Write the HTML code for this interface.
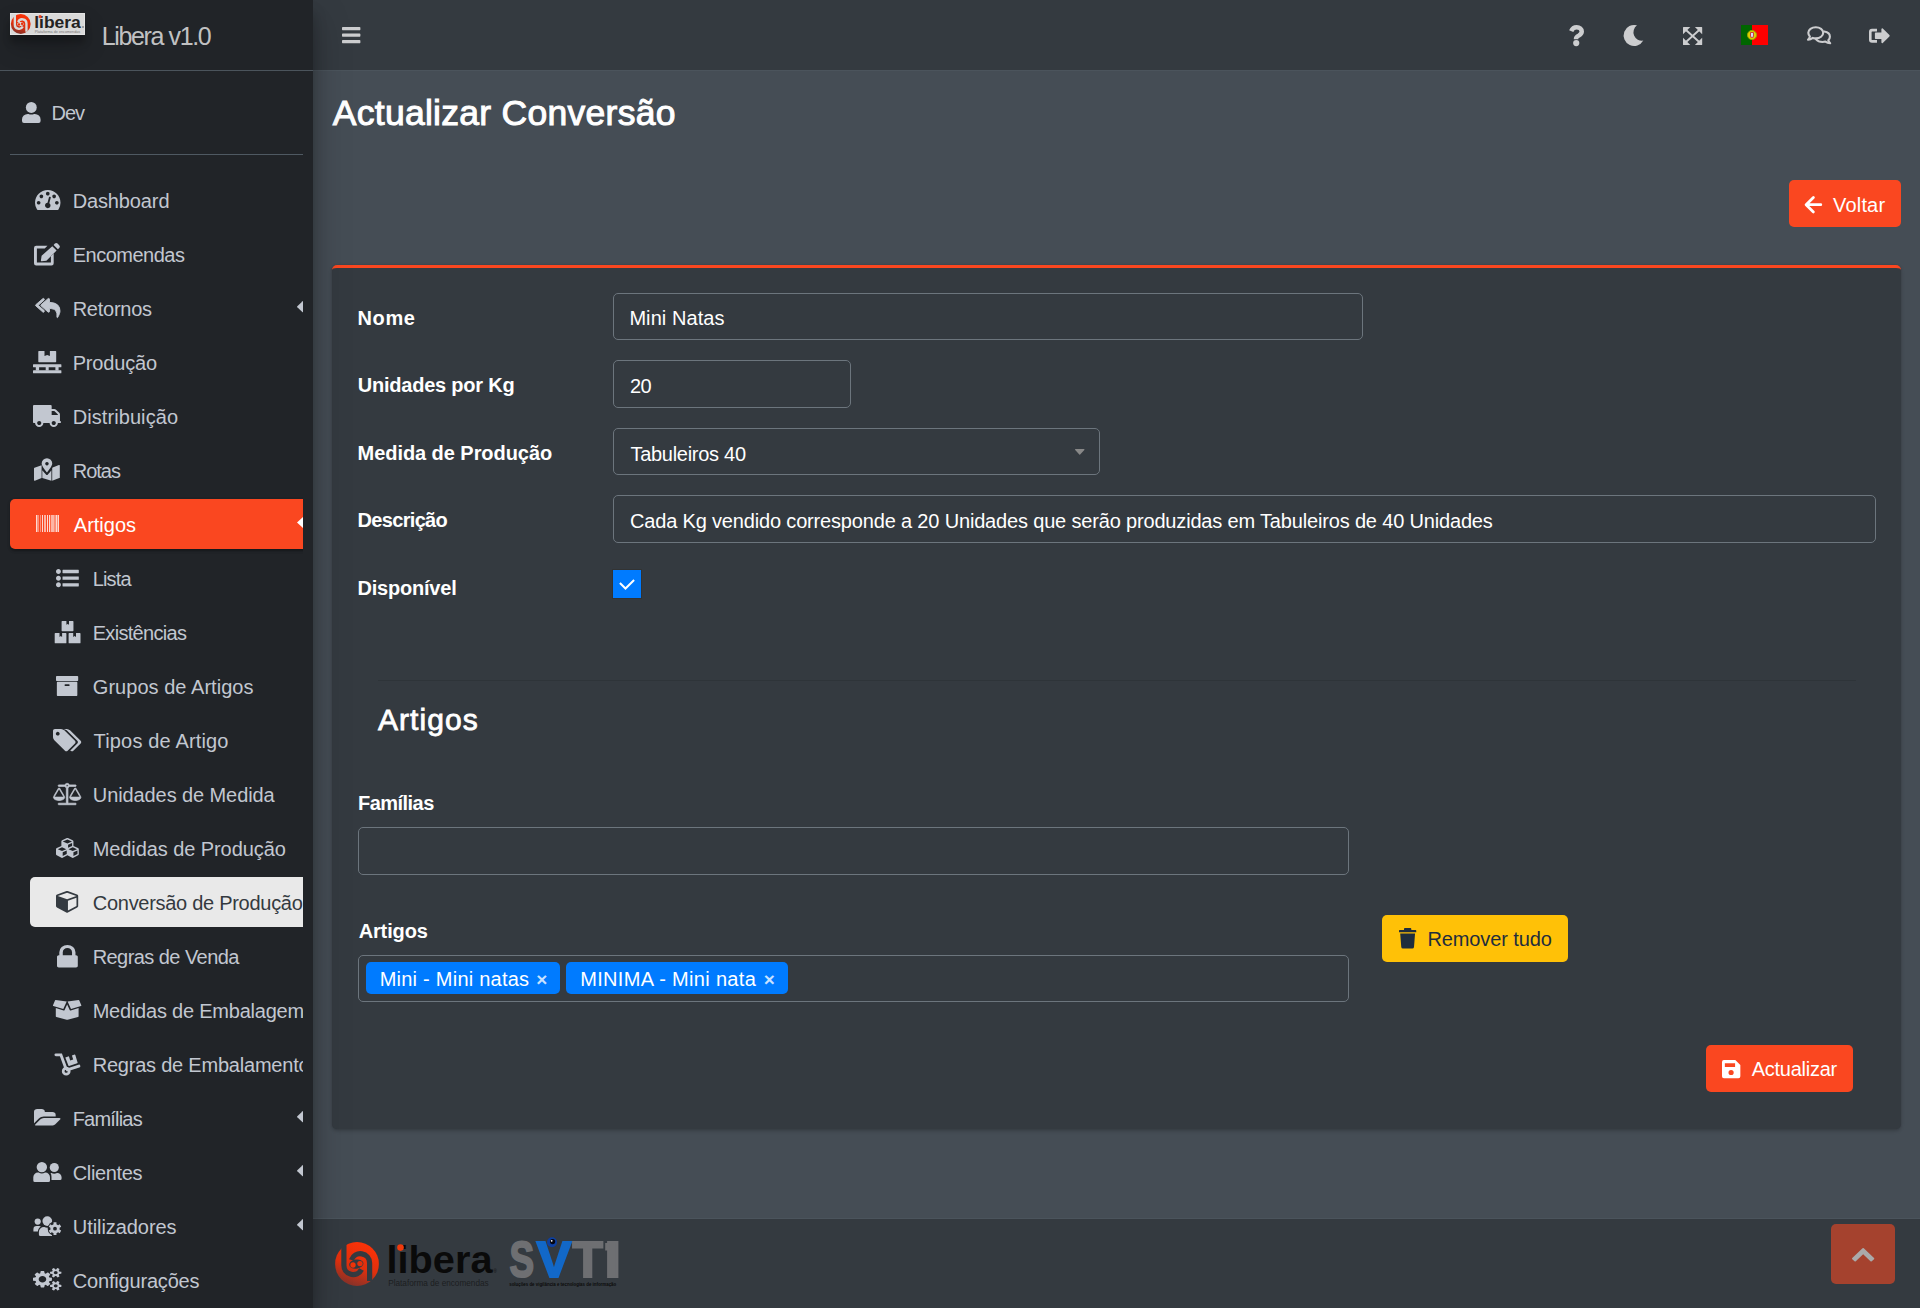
<!DOCTYPE html>
<html lang="pt"><head><meta charset="utf-8"><title>Libera v1.0 - Actualizar Conversão</title>
<style>
*{box-sizing:border-box}
html,body{margin:0;padding:0}
body{width:1920px;height:1308px;overflow:hidden;position:relative;background:#454d55;color:#fff;
font-family:"Liberation Sans",Arial,Helvetica,sans-serif;font-size:20px;line-height:1}
.t{position:absolute;white-space:nowrap;line-height:1;display:block;margin:0;padding:0;font-weight:400;text-decoration:none}
header,main,footer,aside,nav,form,ul,li,section{display:contents}
.i{position:absolute;display:block;overflow:visible}
.abs{position:absolute}
#nav{position:absolute;left:312.5px;top:0;width:1607.5px;height:71px;background:#343a40;border-bottom:1px solid #4b545c}
#footer{position:absolute;left:312.5px;top:1217.5px;width:1607.5px;height:91px;background:#343a40;border-top:1px solid #4b545c}
#sb{position:absolute;left:0;top:0;width:312.5px;height:1308px;background:#212428;
box-shadow:0 17.5px 35px rgba(0,0,0,.25),0 12.5px 12.5px rgba(0,0,0,.22)}
#sbin{position:absolute;left:0;top:71px;width:303px;height:1237px;overflow:hidden}
#sbin > div{position:absolute;left:0;top:-71px;width:400px;height:1308px}
.card{position:absolute;left:332px;top:265px;width:1568.6px;height:864px;background:#343a40;border-top:3.75px solid #fa4720;border-radius:5px;
box-shadow:0 0 1.25px rgba(0,0,0,.125),0 1.25px 3.75px rgba(0,0,0,.2)}
.inp{position:absolute;border:1px solid #6c757d;border-radius:5px;background:#343a40}
.btn{position:absolute;border-radius:5px}
.tag{position:absolute;background:#007bff;border-radius:5px}
</style></head><body>

<header>
<div id="nav"></div>
<svg class="i" style="left:342.00px;top:27.30px;" width="18.40" height="16.30" viewBox="0 0 1536 1280" preserveAspectRatio="none"><path fill="#cccdcf" d="M1536 1088V1216Q1536 1242 1517 1261Q1498 1280 1472 1280H64Q38 1280 19 1261Q0 1242 0 1216V1088Q0 1062 19 1043Q38 1024 64 1024H1472Q1498 1024 1517 1043Q1536 1062 1536 1088ZM1536 576V704Q1536 730 1517 749Q1498 768 1472 768H64Q38 768 19 749Q0 730 0 704V576Q0 550 19 531Q38 512 64 512H1472Q1498 512 1517 531Q1536 550 1536 576ZM1536 64V192Q1536 218 1517 237Q1498 256 1472 256H64Q38 256 19 237Q0 218 0 192V64Q0 38 19 19Q38 0 64 0H1472Q1498 0 1517 19Q1536 38 1536 64Z"/></svg>
<svg class="i" style="left:1568.80px;top:24.90px;color:#cccdcf;" width="15.05" height="21.20" viewBox="0 0 15 21.2" preserveAspectRatio="none"><g fill="#cccdcf"><path d="M2.2,6.1 C3.3,3.5 5.2,2.3 7.7,2.3 C10.6,2.3 12.7,4 12.7,6.5 C12.7,8.6 11.4,9.6 9.7,10.6 C7.9,11.6 7.05,12.3 7.05,13.4 V14.2" fill="none" stroke="currentColor" stroke-width="4.5" stroke-linejoin="round"/><circle cx="7.2" cy="18.1" r="3.1"/></g></svg>
<svg class="i" style="left:1623.80px;top:25.00px;color:#cccdcf;" width="19.60" height="21.00" viewBox="0 0 19.6 21" preserveAspectRatio="none"><g fill="#cccdcf"><path d="M13.0,0.35 A10.5,10.5 0 1 0 19.3,15.6 A8.47,8.47 0 0 1 13.0,0.35Z"/></g></svg>
<svg class="i" style="left:1682.80px;top:26.70px;color:#cccdcf;" width="19.20" height="18.00" viewBox="0 0 19.4 18.1" preserveAspectRatio="none"><g fill="#cccdcf"><path d="M3,3 L16.4,15.1 M16.4,3 L3,15.1" fill="none" stroke="currentColor" stroke-width="1.9"/><path d="M0.6,0 H7.4 L0,7.4 V0.6 A0.6,0.6 0 0 1 0.6,0Z M18.8,0 H12 L19.4,7.4 V0.6 A0.6,0.6 0 0 0 18.8,0Z M0.6,18.1 H7.4 L0,10.7 V17.5 A0.6,0.6 0 0 0 0.6,18.1Z M18.8,18.1 H12 L19.4,10.7 V17.5 A0.6,0.6 0 0 1 18.8,18.1Z"/></g></svg>
<div class="abs" style="left:1741.2px;top:25px;width:27px;height:20px;background:#ff0000"></div>
<div class="abs" style="left:1741.2px;top:25px;width:10.8px;height:20px;background:#006600"></div>
<div class="abs" style="left:1746.9px;top:30px;width:9.8px;height:9.8px;border-radius:50%;background:#e0d000;border:1px solid #9aa800"></div>
<div class="abs" style="left:1749.5px;top:32px;width:4.6px;height:5.8px;border-radius:1px 1px 2.3px 2.3px;background:#d8dcf4;border:0.8px solid #d04040"></div>
<svg class="i" style="left:1806.70px;top:26.30px;color:#cccdcf;" width="24.00" height="18.30" viewBox="0 0 24 18.3" preserveAspectRatio="none"><g fill="#cccdcf"><path d="M8.8,1.2 C13,1.2 16.2,3.7 16.2,6.8 C16.2,9.9 13,12.4 8.8,12.4 C7.7,12.4 6.7,12.2 5.8,11.9 C4.6,12.8 2.9,13.6 1,13.7 C1.9,12.8 2.6,11.7 2.9,10.5 C1.9,9.5 1.3,8.2 1.3,6.8 C1.3,3.7 4.6,1.2 8.8,1.2Z" fill="none" stroke="currentColor" stroke-width="2.1" stroke-linejoin="round"/><path d="M17.2,5.5 C20.6,6 22.9,8.1 22.9,10.7 C22.9,12 22.3,13.2 21.3,14.2 C21.6,15.3 22.3,16.4 23.2,17.3 C21.3,17.2 19.6,16.5 18.4,15.6 C17.5,15.9 16.5,16 15.5,16 C12.8,16 10.4,15 9.1,13.4" fill="none" stroke="currentColor" stroke-width="2.1" stroke-linejoin="round" stroke-linecap="round"/></g></svg>
<svg class="i" style="left:1869.30px;top:27.70px;color:#cccdcf;" width="20.70" height="15.50" viewBox="0 0 20.7 15.5" preserveAspectRatio="none"><g fill="#cccdcf"><path d="M8,0.8 H3 A3,3 0 0 0 0,3.8 V11.7 A3,3 0 0 0 3,14.7 H8 V12.1 H3.2 A0.6,0.6 0 0 1 2.6,11.5 V4 A0.6,0.6 0 0 1 3.2,3.4 H8Z"/><path d="M5.9,5.3 A0.7,0.7 0 0 1 6.6,4.6 H12.4 V1.2 A0.8,0.8 0 0 1 13.8,0.6 L20.4,7.1 A0.9,0.9 0 0 1 20.4,8.4 L13.8,14.9 A0.8,0.8 0 0 1 12.4,14.3 V10.9 H6.6 A0.7,0.7 0 0 1 5.9,10.2Z"/></g></svg>
</header>
<main>
<h1 class="t" style="left:332.77px;top:95.64px;font-size:35.5px;letter-spacing:0.276px;color:#fff;-webkit-text-stroke:1px #fff;">Actualizar Conversão</h1>
<div class="btn" style="left:1789px;top:180px;width:112px;height:47px;background:#fa4720"></div>
<svg class="i" style="left:1804.00px;top:195.80px;color:#fff;" width="18.20" height="17.40" viewBox="0 0 18.2 17.4" preserveAspectRatio="none"><g fill="#fff"><path d="M9.4,1.5 L2.1,8.7 L9.4,15.9 M2.6,8.7 H16.8" fill="none" stroke="currentColor" stroke-width="2.8" stroke-linecap="round" stroke-linejoin="round"/></g></svg>
<span class="t" style="left:1833.08px;top:194.87px;font-size:20px;letter-spacing:0.170px;color:#fff;">Voltar</span>
<section><div class="card"></div><form>
<label class="t" style="left:357.57px;top:308.27px;font-size:20px;letter-spacing:0.608px;color:#fff;font-weight:700;">Nome</label>
<div class="inp" style="left:613px;top:293px;width:750px;height:47px"></div>
<span class="t" style="left:629.38px;top:308.27px;font-size:20px;letter-spacing:0.075px;color:#fff;">Mini Natas</span>
<label class="t" style="left:357.70px;top:375.07px;font-size:20px;letter-spacing:-0.216px;color:#fff;font-weight:700;">Unidades por Kg</label>
<div class="inp" style="left:613px;top:360px;width:238px;height:48px"></div>
<span class="t" style="left:630.00px;top:376.07px;font-size:20px;letter-spacing:-0.700px;color:#fff;">20</span>
<label class="t" style="left:357.57px;top:443.07px;font-size:20px;letter-spacing:-0.056px;color:#fff;font-weight:700;">Medida de Produção</label>
<div class="inp" style="left:613px;top:428px;width:487px;height:47px"></div>
<span class="t" style="left:630.42px;top:444.27px;font-size:20px;letter-spacing:-0.273px;color:#fff;">Tabuleiros 40</span>
<svg class="i" style="left:1075.30px;top:449.30px;" width="9.50" height="5.70" viewBox="0 0 1024 576" preserveAspectRatio="none"><path fill="#888" d="M1005 109 557 557Q538 576 512 576Q486 576 467 557L19 109Q0 90 0 64Q0 38 19 19Q38 0 64 0H960Q986 0 1005 19Q1024 38 1024 64Q1024 90 1005 109Z"/></svg>
<label class="t" style="left:357.57px;top:510.07px;font-size:20px;letter-spacing:-0.681px;color:#fff;font-weight:700;">Descrição</label>
<div class="inp" style="left:613px;top:495px;width:1263px;height:48px"></div>
<span class="t" style="left:630.00px;top:511.17px;font-size:20px;letter-spacing:-0.169px;color:#fff;">Cada Kg vendido corresponde a 20 Unidades que serão produzidas em Tabuleiros de 40 Unidades</span>
<label class="t" style="left:357.38px;top:578.07px;font-size:20px;letter-spacing:-0.192px;color:#fff;font-weight:700;">Disponível</label>
<div class="abs" style="left:613px;top:570px;width:28px;height:28px;background:#007bff;box-shadow:0 0 0 1px rgba(50,45,40,.55)"></div>
<svg class="i" style="left:613px;top:570px" width="28" height="28" viewBox="0 0 28 28"><path d="M6.9 13.0 L12.5 18.5 L21.1 10.0" fill="none" stroke="#fff" stroke-width="2"/></svg>
<div class="abs" style="left:377.5px;top:680px;width:1478px;height:1px;background:rgba(0,0,0,.1)"></div>
<h4 class="t" style="left:377.98px;top:705.20px;font-size:30px;letter-spacing:1.062px;color:#fff;-webkit-text-stroke:0.8px #fff;">Artigos</h4>
<label class="t" style="left:357.98px;top:792.67px;font-size:20px;letter-spacing:-0.532px;color:#fff;font-weight:700;">Famílias</label>
<div class="inp" style="left:358px;top:827px;width:991px;height:48px"></div>
<label class="t" style="left:358.65px;top:921.37px;font-size:20px;letter-spacing:-0.133px;color:#fff;font-weight:700;">Artigos</label>
<div class="inp" style="left:358px;top:955px;width:991px;height:47px"></div>
<div class="tag" style="left:366px;top:962px;width:194px;height:32px"></div>
<span class="t" style="left:379.68px;top:969.07px;font-size:20px;letter-spacing:0.241px;color:#fff;">Mini - Mini natas</span>
<span class="t" style="left:536.33px;top:970.11px;font-size:19px;letter-spacing:0.000px;color:rgba(255,255,255,.78);font-weight:700;">×</span>
<div class="tag" style="left:566.2px;top:962px;width:221.6px;height:32px"></div>
<span class="t" style="left:580.17px;top:969.07px;font-size:20px;letter-spacing:0.331px;color:#fff;">MINIMA - Mini nata</span>
<span class="t" style="left:763.73px;top:970.11px;font-size:19px;letter-spacing:0.000px;color:rgba(255,255,255,.78);font-weight:700;">×</span>
<div class="btn" style="left:1382px;top:915px;width:186px;height:47px;background:#ffc107"></div>
<svg class="i" style="left:1398.75px;top:928.00px;color:#1f2d3d;" width="17.25" height="20.40" viewBox="0 0 17.25 20.4" preserveAspectRatio="none"><g fill="#1f2d3d"><path d="M5,0.9 A0.9,0.9 0 0 1 5.9,0 H11.4 A0.9,0.9 0 0 1 12.3,0.9 V2 H16.6 A0.65,0.65 0 0 1 17.25,2.65 V4.3 H0 V2.65 A0.65,0.65 0 0 1 0.65,2 H5Z M1.2,5.6 H16.05 L15,18.9 A1.7,1.7 0 0 1 13.3,20.4 H3.95 A1.7,1.7 0 0 1 2.25,18.9Z"/></g></svg>
<span class="t" style="left:1427.38px;top:928.87px;font-size:20px;letter-spacing:-0.102px;color:#1f2d3d;">Remover tudo</span>
<div class="btn" style="left:1706px;top:1045px;width:147px;height:47px;background:#fa4720"></div>
<svg class="i" style="left:1721.90px;top:1059.60px;color:#fff;" width="18.35" height="18.15" viewBox="0 0 18.35 18.15" preserveAspectRatio="none"><g fill="#fff"><path fill-rule="evenodd" d="M0,1.9 A1.9,1.9 0 0 1 1.9,0 H13.3 L18.35,5 V16.25 A1.9,1.9 0 0 1 16.45,18.15 H1.9 A1.9,1.9 0 0 1 0,16.25Z M2.85,3.15 V6.9 H13.1 V3.15Z M6.5,12.5 a2.6,2.6 0 1 0 5.2,0 a2.6,2.6 0 1 0 -5.2,0Z"/></g></svg>
<span class="t" style="left:1751.75px;top:1059.32px;font-size:20px;letter-spacing:-0.261px;color:#fff;">Actualizar</span>
</form></section></main>
<footer>
<div id="footer"></div>
<svg class="i" style="left:330px;top:1236px" width="300" height="60" viewBox="330 1236 300 60"><defs><linearGradient id="g1" x1="0.75" y1="0.1" x2="0.45" y2="1"><stop offset="0" stop-color="#f93208"/><stop offset="0.55" stop-color="#e0300e"/><stop offset="1" stop-color="#8a3228"/></linearGradient></defs><circle cx="357" cy="1264" r="21.9" fill="url(#g1)"/><path d="M343.90,1243.00 L343.90,1265.00 A9.30,9.30 0 0 0 361.50,1269.50" fill="none" stroke="#343a40" stroke-width="5.20"/><path d="M369.60,1281.00 L369.60,1263.00 A9.30,9.30 0 0 0 351.50,1260.00" fill="none" stroke="#343a40" stroke-width="5.20"/><ellipse cx="356.30" cy="1264.00" rx="7.20" ry="4.60" fill="#343a40" transform="rotate(-8 357 1264)"/><circle cx="353.00" cy="1265.00" r="2.70" fill="#ef3308"/><circle cx="360.00" cy="1263.60" r="2.70" fill="#e5300c"/><text x="386.5" y="1273.2" font-family="Liberation Sans,Arial,sans-serif" font-weight="700" font-size="39" textLength="106" lengthAdjust="spacingAndGlyphs" fill="#0a0a0a">libera</text><circle cx="400.5" cy="1247.6" r="3.3" fill="#f03a0c"/><text x="493.5" y="1273" font-family="Liberation Sans,Arial,sans-serif" font-size="4.5" fill="#111">®</text><text x="388.2" y="1286.2" font-family="Liberation Sans,Arial,sans-serif" font-size="8.6" textLength="100.5" lengthAdjust="spacingAndGlyphs" fill="#1c1e20">Plataforma de encomendas</text><g font-family="Liberation Sans,Arial,sans-serif" font-weight="700" font-size="49.5" stroke-width="2" stroke-linejoin="miter"><text x="509.6" y="1277" textLength="24.6" lengthAdjust="spacingAndGlyphs" fill="#6e6f72" stroke="#6e6f72">S</text><text x="536.6" y="1277" textLength="34.8" lengthAdjust="spacingAndGlyphs" fill="#1268c8" stroke="#1268c8">V</text><text x="572.6" y="1277" textLength="30.4" lengthAdjust="spacingAndGlyphs" fill="#6e6f72" stroke="#6e6f72">T</text><text x="604.3" y="1277" textLength="17" lengthAdjust="spacingAndGlyphs" fill="#6e6f72" stroke="#6e6f72">I</text></g><rect x="605.2" y="1243" width="4" height="7.5" fill="#6e6f72"/><circle cx="552" cy="1242.3" r="5" fill="#0d3fa0"/><circle cx="552.6" cy="1241.6" r="2.6" fill="#050510"/><circle cx="551.7" cy="1240.8" r="0.9" fill="#fff"/><text x="509.2" y="1286.2" font-family="Liberation Sans,Arial,sans-serif" font-weight="700" font-size="5.6" textLength="107" lengthAdjust="spacingAndGlyphs" fill="#0b0b0b">soluções de vigilância e tecnologias de informação</text></svg>
<div class="btn" style="left:1831px;top:1224px;width:64px;height:60px;background:#a5422e"></div>
<svg class="i" style="left:1852.00px;top:1247.70px;" width="22.30" height="13.60" viewBox="0 0 1612 1035" preserveAspectRatio="none"><path fill="#aaaaaa" d="M1593 851 1427 1016Q1408 1035 1382 1035Q1356 1035 1337 1016L806 485L275 1016Q256 1035 230 1035Q204 1035 185 1016L19 851Q0 832 0 806Q0 779 19 760L761 19Q780 0 806 0Q832 0 851 19L1593 760Q1612 779 1612 806Q1612 832 1593 851Z"/></svg>
</footer>
<aside><div id="sb">
<div class="abs" style="left:0;top:70px;width:312.5px;height:1px;background:#4b545c"></div>
<div class="abs" style="left:10px;top:13px;width:75px;height:22px;background:#d9d9d9;border:1px solid #e4e4e4;box-shadow:0 12.5px 25px rgba(0,0,0,.19),0 7.5px 7.5px rgba(0,0,0,.23)"></div><svg class="i" style="left:10px;top:13px" width="75" height="22" viewBox="10 13 75 22"><defs><linearGradient id="g2" x1="0.75" y1="0.1" x2="0.45" y2="1"><stop offset="0" stop-color="#f93208"/><stop offset="0.55" stop-color="#e0300e"/><stop offset="1" stop-color="#8a3228"/></linearGradient></defs><circle cx="20.75" cy="24" r="9.9" fill="url(#g2)"/><path d="M14.83,14.51 L14.83,24.45 A4.20,4.20 0 0 0 22.78,26.49" fill="none" stroke="#d9d9d9" stroke-width="2.35"/><path d="M26.45,31.68 L26.45,23.55 A4.20,4.20 0 0 0 18.26,22.19" fill="none" stroke="#d9d9d9" stroke-width="2.35"/><ellipse cx="20.43" cy="24.00" rx="3.25" ry="2.08" fill="#d9d9d9" transform="rotate(-8 20.75 24)"/><circle cx="18.94" cy="24.45" r="1.22" fill="#ef3308"/><circle cx="22.11" cy="23.82" r="1.22" fill="#e5300c"/><text x="34.2" y="27.8" font-family="Liberation Sans,Arial,sans-serif" font-weight="700" font-size="16.2" textLength="46.6" lengthAdjust="spacingAndGlyphs" fill="#222">libera</text><circle cx="40.1" cy="16.7" r="1.6" fill="#e8401c"/><circle cx="83" cy="27" r="0.8" fill="#555"/><text x="34.7" y="33.3" font-family="Liberation Sans,Arial,sans-serif" font-size="3.8" textLength="45.5" lengthAdjust="spacingAndGlyphs" fill="#777">Plataforma de encomendas</text></svg>
<span class="t" style="left:101.80px;top:23.83px;font-size:25px;letter-spacing:-1.375px;color:rgba(255,255,255,.74);">Libera v1.0</span>
<div id="sbin"><div>
<svg class="i" style="left:22.00px;top:102.00px;color:#c2c7d0;" width="18.60" height="21.00" viewBox="0 0 18.6 21" preserveAspectRatio="none"><g fill="#c2c7d0"><circle cx="9.3" cy="5.45" r="5.45"/><path d="M0,19 V17.6 A5.8,5.7 0 0 1 5.8,11.9 H6.5 A7.2,7.2 0 0 0 12.1,11.9 H12.8 A5.8,5.7 0 0 1 18.6,17.6 V19 A2,2 0 0 1 16.6,21 H2 A2,2 0 0 1 0,19Z"/></g></svg>
<span class="t" style="left:51.48px;top:102.77px;font-size:20px;letter-spacing:-0.988px;color:#c2c7d0;">Dev</span>
<div class="abs" style="left:10px;top:154px;width:293px;height:1px;background:#4f5962"></div>
<nav>
<a class="t" style="left:72.67px;top:191.07px;font-size:20px;letter-spacing:-0.125px;color:#c2c7d0;">Dashboard</a>
<svg class="i" style="left:34.50px;top:189.70px;" width="25.50" height="20.00" viewBox="0 0 1792 1408" preserveAspectRatio="none"><path fill="#c2c7d0" d="M346 986Q384 949 384 896Q384 843 346 806Q309 768 256 768Q203 768 166 806Q128 843 128 896Q128 949 166 986Q203 1024 256 1024Q309 1024 346 986ZM538 538Q576 501 576 448Q576 395 538 358Q501 320 448 320Q395 320 358 358Q320 395 320 448Q320 501 358 538Q395 576 448 576Q501 576 538 538ZM1004 929 1105 547Q1111 521 1098 498Q1084 476 1059 469Q1034 462 1011 476Q988 489 981 515L880 897Q820 902 773 940Q726 979 710 1039Q690 1116 730 1185Q770 1254 847 1274Q924 1294 993 1254Q1062 1214 1082 1137Q1098 1077 1076 1020Q1054 963 1004 929ZM1626 986Q1664 949 1664 896Q1664 843 1626 806Q1589 768 1536 768Q1483 768 1446 806Q1408 843 1408 896Q1408 949 1446 986Q1483 1024 1536 1024Q1589 1024 1626 986ZM986 346Q1024 309 1024 256Q1024 203 986 166Q949 128 896 128Q843 128 806 166Q768 203 768 256Q768 309 806 346Q843 384 896 384Q949 384 986 346ZM1434 538Q1472 501 1472 448Q1472 395 1434 358Q1397 320 1344 320Q1291 320 1254 358Q1216 395 1216 448Q1216 501 1254 538Q1291 576 1344 576Q1397 576 1434 538ZM1792 896Q1792 1157 1651 1379Q1632 1408 1597 1408H195Q160 1408 141 1379Q0 1158 0 896Q0 714 71 548Q142 382 262 262Q382 142 548 71Q714 0 896 0Q1078 0 1244 71Q1410 142 1530 262Q1650 382 1721 548Q1792 714 1792 896Z"/></svg>
<a class="t" style="left:72.67px;top:245.07px;font-size:20px;letter-spacing:-0.497px;color:#c2c7d0;">Encomendas</a>
<svg class="i" style="left:34.20px;top:242.70px;color:#c2c7d0;" width="25.80" height="22.50" viewBox="0 0 25.8 22.5" preserveAspectRatio="none"><g fill="#c2c7d0"><path d="M2.2,2.8 H13.5 L10.7,5.6 H2.9 V19.6 H16.9 V13.3 L19.7,10.5 V20.3 A2.2,2.2 0 0 1 17.5,22.5 H2.2 A2.2,2.2 0 0 1 0,20.3 V5 A2.2,2.2 0 0 1 2.2,2.8Z"/><path d="M18.3,3.2 L22.6,7.5 L12.4,17.7 L7.6,18.3 A0.6,0.6 0 0 1 6.9,17.6 L7.6,12.8Z M19.6,1.9 L20.9,0.6 A1.9,1.9 0 0 1 23.6,0.6 L25.2,2.2 A1.9,1.9 0 0 1 25.2,4.9 L23.9,6.2Z"/></g></svg>
<a class="t" style="left:72.67px;top:299.07px;font-size:20px;letter-spacing:-0.250px;color:#c2c7d0;">Retornos</a>
<svg class="i" style="left:34.50px;top:297.70px;" width="25.50" height="20.00" viewBox="0 0 1792 1601" preserveAspectRatio="none"><g transform="translate(35.0,35.0) scale(0.9609,0.9563)"><path fill="#c2c7d0" stroke="#c2c7d0" stroke-width="70" stroke-linejoin="round" d="M640 1019V1089Q640 1131 601 1148Q588 1153 576 1153Q549 1153 531 1134L19 622Q0 603 0 577Q0 551 19 532L531 20Q560 -11 601 6Q640 23 640 65V134L243 532Q224 551 224 577Q224 603 243 622ZM1792 1057Q1792 1115 1775 1191Q1758 1266 1736 1329Q1715 1391 1688 1454Q1662 1516 1648 1544Q1634 1572 1628 1584Q1620 1601 1600 1601Q1594 1601 1591 1600Q1566 1592 1568 1566Q1611 1166 1462 1001Q1398 930 1292 891Q1185 851 1024 838V1089Q1024 1131 985 1148Q972 1153 960 1153Q933 1153 915 1134L403 622Q384 603 384 577Q384 551 403 532L915 20Q944 -11 985 6Q1024 23 1024 65V327Q1435 355 1623 548Q1792 721 1792 1057Z"/></g></svg>
<svg class="i" style="left:297.2px;top:301.0px" width="8" height="11.4" viewBox="0 0 8 11.4"><path fill="#c2c7d0" d="M0.3 6.2 Q-0.2 5.7 0.3 5.2 L5.6 0.2 Q6.4 -0.3 6.6 0.6 V10.8 Q6.4 11.7 5.6 11.2Z"/></svg>
<a class="t" style="left:72.67px;top:353.07px;font-size:20px;letter-spacing:-0.161px;color:#c2c7d0;">Produção</a>
<svg class="i" style="left:32.80px;top:350.80px;color:#c2c7d0;" width="28.40" height="22.20" viewBox="0 0 28.4 22.2" preserveAspectRatio="none"><g fill="#c2c7d0"><path d="M5.3,0.6 A0.6,0.6 0 0 1 5.9,0 H11.5 V5 L14.2,3.9 L16.9,5 V0 H22.6 A0.6,0.6 0 0 1 23.2,0.6 V10.6 A0.6,0.6 0 0 1 22.6,11.2 H5.9 A0.6,0.6 0 0 1 5.3,10.6Z"/><rect x="0" y="13.3" width="28.4" height="3" rx="0.5"/><rect x="0" y="19.2" width="28.4" height="3" rx="0.5"/><rect x="2.8" y="16" width="3.3" height="3.5"/><rect x="12.7" y="16" width="3" height="3.5"/><rect x="22.4" y="16" width="3.2" height="3.5"/></g></svg>
<a class="t" style="left:72.67px;top:407.07px;font-size:20px;letter-spacing:0.082px;color:#c2c7d0;">Distribuição</a>
<svg class="i" style="left:32.80px;top:404.70px;" width="28.00" height="22.00" viewBox="0 0 1728 1408" preserveAspectRatio="none"><path fill="#c2c7d0" transform="translate(1728,0) scale(-1,1)" d="M538 1242Q576 1204 576 1152Q576 1100 538 1062Q500 1024 448 1024Q396 1024 358 1062Q320 1100 320 1152Q320 1204 358 1242Q396 1280 448 1280Q500 1280 538 1242ZM192 640H576V384H418Q405 384 396 393L201 588Q192 597 192 610ZM1434 1242Q1472 1204 1472 1152Q1472 1100 1434 1062Q1396 1024 1344 1024Q1292 1024 1254 1062Q1216 1100 1216 1152Q1216 1204 1254 1242Q1292 1280 1344 1280Q1396 1280 1434 1242ZM1728 64V1088Q1728 1103 1724 1114Q1720 1126 1710 1133Q1701 1140 1694 1144Q1687 1149 1670 1150Q1654 1152 1648 1152Q1642 1153 1622 1152Q1603 1152 1600 1152Q1600 1258 1525 1333Q1450 1408 1344 1408Q1238 1408 1163 1333Q1088 1258 1088 1152H704Q704 1258 629 1333Q554 1408 448 1408Q342 1408 267 1333Q192 1258 192 1152H128Q125 1152 106 1152Q86 1153 80 1152Q74 1152 58 1150Q41 1149 34 1144Q27 1140 18 1133Q8 1126 4 1114Q0 1103 0 1088Q0 1062 19 1043Q38 1024 64 1024V704Q64 696 64 669Q63 642 64 631Q64 620 66 596Q68 573 72 560Q77 546 86 529Q96 512 109 499L307 301Q326 282 358 269Q389 256 416 256H576V64Q576 38 595 19Q614 0 640 0H1664Q1690 0 1709 19Q1728 38 1728 64Z"/></svg>
<a class="t" style="left:72.67px;top:461.07px;font-size:20px;letter-spacing:-0.969px;color:#c2c7d0;">Rotas</a>
<svg class="i" style="left:34.20px;top:458.20px;color:#c2c7d0;" width="25.80" height="22.80" viewBox="0 0 25.8 22.8" preserveAspectRatio="none"><g fill="#c2c7d0"><path d="M0,10.4 A0.8,0.8 0 0 1 0.5,9.7 L7.6,7.2 V20.1 L0.9,22.7 A0.65,0.65 0 0 1 0,22.1Z"/><path d="M8.3,12.2 C9.7,14 11.2,15.6 12.2,16.7 A1,1 0 0 0 13.7,16.7 C14.7,15.6 16.2,14 17.4,12.2 V22.7 L8.3,19.9Z"/><path d="M18.2,10.2 A0.8,0.8 0 0 1 18.7,9.5 L24.9,7 A0.65,0.65 0 0 1 25.8,7.6 V19.4 A0.8,0.8 0 0 1 25.3,20.1 L18.2,22.7Z"/><path fill-rule="evenodd" d="M12.95,0.3 A5.3,5.3 0 0 0 7.65,5.6 C7.65,8 11.1,12.3 12.45,13.9 A0.65,0.65 0 0 0 13.45,13.9 C14.8,12.3 18.25,8 18.25,5.6 A5.3,5.3 0 0 0 12.95,0.3Z M12.95,3.9 a1.75,1.75 0 1 0 0.001,0Z"/></g></svg>
<div class="abs" style="left:10px;top:499px;width:320px;height:50px;background:#fa4720;border-radius:5px;box-shadow:0 1.25px 3.75px rgba(0,0,0,.12),0 1.25px 2.5px rgba(0,0,0,.24)"></div>
<a class="t" style="left:73.80px;top:515.07px;font-size:20px;letter-spacing:0.000px;color:#fff;">Artigos</a>
<svg class="i" style="left:35.50px;top:515.20px;" width="22.80" height="17.00" viewBox="0 0 1792 1408" preserveAspectRatio="none"><path fill="#fff" d="M63 1408H0V0H63ZM126 1407H94V0H126ZM220 1407H189V0H220ZM377 1407H346V0H377ZM534 1407H472V0H534ZM660 1407H629V0H660ZM723 1407H692V0H723ZM786 1407H755V0H786ZM943 1407H880V0H943ZM1100 1407H1037V0H1100ZM1226 1407H1163V0H1226ZM1352 1407H1289V0H1352ZM1446 1407H1383V0H1446ZM1635 1407H1541V0H1635ZM1698 1407H1666V0H1698ZM1792 1408H1729V0H1792Z"/></svg>
<svg class="i" style="left:297px;top:517.0px" width="12" height="12" viewBox="0 0 12 12"><path fill="#fff" d="M0 5.5L6 0V11Z M6 0h6v11h-6z"/></svg>
<a class="t" style="left:92.67px;top:569.07px;font-size:20px;letter-spacing:-0.806px;color:#c2c7d0;">Lista</a>
<svg class="i" style="left:55.50px;top:568.50px;" width="22.80" height="18.30" viewBox="0 0 1792 1408" preserveAspectRatio="none"><path fill="#c2c7d0" d="M328 1080Q384 1136 384 1216Q384 1296 328 1352Q272 1408 192 1408Q112 1408 56 1352Q0 1296 0 1216Q0 1136 56 1080Q112 1024 192 1024Q272 1024 328 1080ZM328 568Q384 624 384 704Q384 784 328 840Q272 896 192 896Q112 896 56 840Q0 784 0 704Q0 624 56 568Q112 512 192 512Q272 512 328 568ZM1792 1120V1312Q1792 1325 1782 1334Q1773 1344 1760 1344H544Q531 1344 522 1334Q512 1325 512 1312V1120Q512 1107 522 1098Q531 1088 544 1088H1760Q1773 1088 1782 1098Q1792 1107 1792 1120ZM328 56Q384 112 384 192Q384 272 328 328Q272 384 192 384Q112 384 56 328Q0 272 0 192Q0 112 56 56Q112 0 192 0Q272 0 328 56ZM1792 608V800Q1792 813 1782 822Q1773 832 1760 832H544Q531 832 522 822Q512 813 512 800V608Q512 595 522 586Q531 576 544 576H1760Q1773 576 1782 586Q1792 595 1792 608ZM1792 96V288Q1792 301 1782 310Q1773 320 1760 320H544Q531 320 522 310Q512 301 512 288V96Q512 83 522 74Q531 64 544 64H1760Q1773 64 1782 74Q1792 83 1792 96Z"/></svg>
<a class="t" style="left:92.67px;top:623.07px;font-size:20px;letter-spacing:-0.685px;color:#c2c7d0;">Existências</a>
<svg class="i" style="left:54.50px;top:620.70px;color:#c2c7d0;" width="25.50" height="22.50" viewBox="0 0 25.5 22.5" preserveAspectRatio="none"><g fill="#c2c7d0"><path d="M6.6,0.6 A0.6,0.6 0 0 1 7.199999999999999,0 H11.4 V3.8 L12.7,2.9 L14,3.8 V0 H17.849999999999998 A0.6,0.6 0 0 1 18.45,0.6 V9.6 A0.6,0.6 0 0 1 17.849999999999998,10.2 H7.199999999999999 A0.6,0.6 0 0 1 6.6,9.6Z"/><path d="M-0.3,12.7 A0.6,0.6 0 0 1 0.3,12.1 H4.5 V15.899999999999999 L5.8,14.999999999999998 L7.1,15.899999999999999 V12.1 H10.8 A0.6,0.6 0 0 1 11.4,12.7 V21.7 A0.6,0.6 0 0 1 10.8,22.3 H0.3 A0.6,0.6 0 0 1 -0.3,21.7Z"/><path d="M13.6,12.7 A0.6,0.6 0 0 1 14.2,12.1 H18.2 V15.899999999999999 L19.6,14.999999999999998 L21,15.899999999999999 V12.1 H24.9 A0.6,0.6 0 0 1 25.5,12.7 V21.7 A0.6,0.6 0 0 1 24.9,22.3 H14.2 A0.6,0.6 0 0 1 13.6,21.7Z"/></g></svg>
<a class="t" style="left:92.80px;top:677.07px;font-size:20px;letter-spacing:0.039px;color:#c2c7d0;">Grupos de Artigos</a>
<svg class="i" style="left:55.80px;top:675.70px;" width="22.20" height="20.00" viewBox="0 0 1664 1536" preserveAspectRatio="none"><path fill="#c2c7d0" d="M960 640H704Q678 640 659 659Q640 678 640 704Q640 730 659 749Q678 768 704 768H960Q986 768 1005 749Q1024 730 1024 704Q1024 678 1005 659Q986 640 960 640ZM1600 512V1472Q1600 1498 1581 1517Q1562 1536 1536 1536H128Q102 1536 83 1517Q64 1498 64 1472V512Q64 486 83 467Q102 448 128 448H1536Q1562 448 1581 467Q1600 486 1600 512ZM1664 64V320Q1664 346 1645 365Q1626 384 1600 384H64Q38 384 19 365Q0 346 0 320V64Q0 38 19 19Q38 0 64 0H1600Q1626 0 1645 19Q1664 38 1664 64Z"/></svg>
<a class="t" style="left:93.62px;top:731.07px;font-size:20px;letter-spacing:0.152px;color:#c2c7d0;">Tipos de Artigo</a>
<svg class="i" style="left:53.00px;top:728.70px;" width="28.20" height="22.30" viewBox="0 0 1899 1515" preserveAspectRatio="none"><path fill="#c2c7d0" d="M410 410Q448 373 448 320Q448 267 410 230Q373 192 320 192Q267 192 230 230Q192 267 192 320Q192 373 230 410Q267 448 320 448Q373 448 410 410ZM1515 896Q1515 949 1478 986L987 1478Q948 1515 896 1515Q843 1515 806 1478L91 762Q53 725 26 661Q0 597 0 544V128Q0 76 38 38Q76 0 128 0H544Q597 0 661 26Q725 53 763 91L1478 805Q1515 844 1515 896ZM1899 896Q1899 949 1862 986L1371 1478Q1332 1515 1280 1515Q1244 1515 1221 1501Q1198 1487 1168 1456L1638 986Q1675 949 1675 896Q1675 844 1638 805L923 91Q885 53 821 26Q757 0 704 0H928Q981 0 1045 26Q1109 53 1147 91L1862 805Q1899 844 1899 896Z"/></svg>
<a class="t" style="left:92.80px;top:785.07px;font-size:20px;letter-spacing:-0.094px;color:#c2c7d0;">Unidades de Medida</a>
<svg class="i" style="left:53.00px;top:782.70px;" width="28.30" height="22.10" viewBox="0 0 2176 1792" preserveAspectRatio="none"><g transform="translate(30.0,30.0) scale(0.9724,0.9665)"><path fill="#c2c7d0" stroke="#c2c7d0" stroke-width="60" stroke-linejoin="round" d="M1728 448 1344 1152H2112ZM448 448 64 1152H832ZM1269 256Q1255 296 1224 328Q1192 359 1152 373V1664H1760Q1774 1664 1783 1673Q1792 1682 1792 1696V1760Q1792 1774 1783 1783Q1774 1792 1760 1792H416Q402 1792 393 1783Q384 1774 384 1760V1696Q384 1682 393 1673Q402 1664 416 1664H1024V373Q984 359 952 328Q921 296 907 256H416Q402 256 393 247Q384 238 384 224V160Q384 146 393 137Q402 128 416 128H907Q928 71 977 36Q1026 0 1088 0Q1150 0 1199 36Q1248 71 1269 128H1760Q1774 128 1783 137Q1792 146 1792 160V224Q1792 238 1783 247Q1774 256 1760 256ZM1032 248Q1055 272 1088 272Q1121 272 1144 248Q1168 225 1168 192Q1168 159 1144 136Q1121 112 1088 112Q1055 112 1032 136Q1008 159 1008 192Q1008 225 1032 248ZM2176 1152Q2176 1225 2130 1283Q2083 1341 2012 1374Q1941 1407 1868 1424Q1794 1440 1728 1440Q1662 1440 1588 1424Q1515 1407 1444 1374Q1373 1341 1326 1283Q1280 1225 1280 1152Q1280 1141 1315 1071Q1350 1001 1407 896Q1464 792 1514 701Q1564 610 1616 517Q1668 424 1672 417Q1690 384 1728 384Q1766 384 1784 417Q1788 424 1840 517Q1892 610 1942 701Q1992 792 2049 896Q2106 1001 2141 1071Q2176 1141 2176 1152ZM896 1152Q896 1225 850 1283Q803 1341 732 1374Q661 1407 588 1424Q514 1440 448 1440Q382 1440 308 1424Q235 1407 164 1374Q93 1341 46 1283Q0 1225 0 1152Q0 1141 35 1071Q70 1001 127 896Q184 792 234 701Q284 610 336 517Q388 424 392 417Q410 384 448 384Q486 384 504 417Q508 424 560 517Q612 610 662 701Q712 792 769 896Q826 1001 861 1071Q896 1141 896 1152Z"/></g></svg>
<a class="t" style="left:92.67px;top:839.07px;font-size:20px;letter-spacing:-0.079px;color:#c2c7d0;">Medidas de Produção</a>
<svg class="i" style="left:55.50px;top:837.80px;" width="22.80" height="19.90" viewBox="0 0 2176 1792" preserveAspectRatio="none"><path fill="#c2c7d0" d="M640 1632 1024 1440V1126L640 1290ZM576 1178 980 1005 576 832 172 1005ZM1664 1632 2048 1440V1126L1664 1290ZM1600 1178 2004 1005 1600 832 1196 1005ZM1152 885 1536 720V454L1152 618ZM1088 506 1529 317 1088 128 647 317ZM2176 1024V1440Q2176 1476 2157 1507Q2138 1538 2105 1554L1657 1778Q1632 1792 1600 1792Q1568 1792 1543 1778L1095 1554Q1091 1552 1088 1550Q1086 1552 1081 1554L633 1778Q608 1792 576 1792Q544 1792 519 1778L71 1554Q38 1538 19 1507Q0 1476 0 1440V1024Q0 986 22 954Q43 922 78 906L512 720V320Q512 282 534 250Q555 218 590 202L1038 10Q1061 0 1088 0Q1115 0 1138 10L1586 202Q1621 218 1642 250Q1664 282 1664 320V720L2098 906Q2134 922 2155 954Q2176 986 2176 1024Z"/></svg>
<div class="abs" style="left:30px;top:877px;width:320px;height:50px;background:#e9e9e9;border-radius:5px"></div>
<a class="t" style="left:92.80px;top:893.07px;font-size:20px;letter-spacing:-0.284px;color:#343a40;">Conversão de Produção</a>
<svg class="i" style="left:55.80px;top:890.80px;" width="22.20" height="21.70" viewBox="0 0 1664 1664" preserveAspectRatio="none"><path fill="#343a40" d="M896 1501 1536 1152V516L896 749ZM832 636 1530 382 832 128 134 382ZM1664 384V1152Q1664 1187 1646 1217Q1628 1247 1597 1264L893 1648Q865 1664 832 1664Q799 1664 771 1648L67 1264Q36 1247 18 1217Q0 1187 0 1152V384Q0 344 23 311Q46 278 84 264L788 8Q810 0 832 0Q854 0 876 8L1580 264Q1618 278 1641 311Q1664 344 1664 384Z"/></svg>
<a class="t" style="left:92.67px;top:947.07px;font-size:20px;letter-spacing:-0.557px;color:#c2c7d0;">Regras de Venda</a>
<svg class="i" style="left:56.70px;top:944.50px;" width="20.80" height="22.50" viewBox="0 0 1152 1408" preserveAspectRatio="none"><path fill="#c2c7d0" d="M320 640H832V448Q832 342 757 267Q682 192 576 192Q470 192 395 267Q320 342 320 448ZM1152 736V1312Q1152 1352 1124 1380Q1096 1408 1056 1408H96Q56 1408 28 1380Q0 1352 0 1312V736Q0 696 28 668Q56 640 96 640H128V448Q128 264 260 132Q392 0 576 0Q760 0 892 132Q1024 264 1024 448V640H1056Q1096 640 1124 668Q1152 696 1152 736Z"/></svg>
<a class="t" style="left:92.67px;top:1001.07px;font-size:20px;letter-spacing:-0.221px;color:#c2c7d0;">Medidas de Embalagem</a>
<svg class="i" style="left:53.00px;top:1000.00px;color:#c2c7d0;" width="28.30" height="19.80" viewBox="0 0 28.3 19.8" preserveAspectRatio="none"><g fill="#c2c7d0"><path d="M2.6,0 L13.7,1.6 L10.3,9 L0.3,5.9 A0.5,0.5 0 0 1 0,5.2 L2,0.4 A0.6,0.6 0 0 1 2.6,0Z"/><path d="M25.7,0 L14.6,1.6 L18,9 L28,5.9 A0.5,0.5 0 0 0 28.3,5.2 L26.3,0.4 A0.6,0.6 0 0 0 25.7,0Z"/><path d="M2.8,7.9 L10.6,10.4 A0.9,0.9 0 0 0 11.6,9.9 L14.15,4.4 L16.7,9.9 A0.9,0.9 0 0 0 17.7,10.4 L25.6,7.9 V16.2 A0.8,0.8 0 0 1 25,17 L14.6,19.7 A1.6,1.6 0 0 1 13.7,19.7 L3.4,17 A0.8,0.8 0 0 1 2.8,16.2Z"/></g></svg>
<a class="t" style="left:92.67px;top:1055.07px;font-size:20px;letter-spacing:-0.214px;color:#c2c7d0;">Regras de Embalamento</a>
<svg class="i" style="left:54.70px;top:1052.50px;color:#c2c7d0;" width="25.30" height="22.50" viewBox="0 0 25.3 22.5" preserveAspectRatio="none"><g fill="#c2c7d0"><path d="M0.9,1.85 H5.9 L10.9,15.6" fill="none" stroke="currentColor" stroke-width="2.9" stroke-linecap="round" stroke-linejoin="miter"/><path d="M12.3,16.9 L23.9,13.1" fill="none" stroke="currentColor" stroke-width="2.9" stroke-linecap="round"/><circle cx="11.2" cy="18.2" r="3.0" fill="none" stroke="currentColor" stroke-width="2.7"/><path d="M10.3,4.5 L13.9,3.35 L15.2,7.4 L18.2,6.45 L16.9,2.4 L19.6,1.55 A0.6,0.6 0 0 1 20.3,1.9 L22.6,9.6 A0.6,0.6 0 0 1 22.2,10.35 L14.1,13 A0.6,0.6 0 0 1 13.35,12.6Z"/></g></svg>
<a class="t" style="left:72.67px;top:1109.07px;font-size:20px;letter-spacing:-0.793px;color:#c2c7d0;">Famílias</a>
<svg class="i" style="left:33.80px;top:1109.20px;" width="26.50" height="16.60" viewBox="0 0 1879 1408" preserveAspectRatio="none"><path fill="#c2c7d0" d="M1879 824Q1879 855 1848 890L1512 1286Q1469 1337 1392 1372Q1314 1408 1248 1408H160Q126 1408 100 1395Q73 1382 73 1352Q73 1321 104 1286L440 890Q483 839 560 804Q638 768 704 768H1792Q1826 768 1852 781Q1879 794 1879 824ZM1536 480V640H704Q610 640 507 688Q404 735 343 807L6 1203L1 1209Q1 1205 0 1196Q0 1188 0 1184V224Q0 132 66 66Q132 0 224 0H544Q636 0 702 66Q768 132 768 224V256H1312Q1404 256 1470 322Q1536 388 1536 480Z"/></svg>
<svg class="i" style="left:297.2px;top:1111.0px" width="8" height="11.4" viewBox="0 0 8 11.4"><path fill="#c2c7d0" d="M0.3 6.2 Q-0.2 5.7 0.3 5.2 L5.6 0.2 Q6.4 -0.3 6.6 0.6 V10.8 Q6.4 11.7 5.6 11.2Z"/></svg>
<a class="t" style="left:72.80px;top:1163.07px;font-size:20px;letter-spacing:-0.371px;color:#c2c7d0;">Clientes</a>
<svg class="i" style="left:32.80px;top:1162.00px;color:#c2c7d0;" width="28.40" height="20.00" viewBox="0 0 28.4 20" preserveAspectRatio="none"><g fill="#c2c7d0"><circle cx="8.85" cy="5.1" r="5.2"/><path d="M0.3,18.5 V15.2 A4.6,4.6 0 0 1 4.9,10.6 H5.6 A7,7 0 0 0 12.1,10.6 H12.4 A4.6,4.6 0 0 1 17,15.2 V18.5 A1.5,1.5 0 0 1 15.5,20 H1.8 A1.5,1.5 0 0 1 0.3,18.5Z"/><circle cx="21.3" cy="5.45" r="4.55"/><path d="M17.5,10.9 H18.4 A6,6 0 0 0 24,10.9 H24.3 A4.3,4.3 0 0 1 28.6,15.2 V16.4 A1.5,1.5 0 0 1 27.1,17.9 H18.5 V15 C18.5,13.3 18.2,12 17.5,10.9Z"/></g></svg>
<svg class="i" style="left:297.2px;top:1165.0px" width="8" height="11.4" viewBox="0 0 8 11.4"><path fill="#c2c7d0" d="M0.3 6.2 Q-0.2 5.7 0.3 5.2 L5.6 0.2 Q6.4 -0.3 6.6 0.6 V10.8 Q6.4 11.7 5.6 11.2Z"/></svg>
<a class="t" style="left:72.80px;top:1217.07px;font-size:20px;letter-spacing:-0.068px;color:#c2c7d0;">Utilizadores</a>
<svg class="i" style="left:32.80px;top:1215.80px;color:#c2c7d0;" width="28.40" height="20.40" viewBox="0 0 28.4 20.4" preserveAspectRatio="none"><g fill="#c2c7d0"><circle cx="4.7" cy="5.6" r="3.1"/><path d="M0.4,13.4 A3.3,3.3 0 0 1 3.7,10.1 H6.2 A3,3 0 0 1 7.9,10.6 C6,11.8 5,13.6 4.9,15.5 H0.4Z"/><circle cx="14.3" cy="5.1" r="4.85"/><path d="M5.9,18.4 V16.1 A5,5 0 0 1 10.9,11.1 H11.3 A7,7 0 0 0 17.3,11.1 H19 V19.9 H7.4 A1.5,1.5 0 0 1 5.9,18.4Z"/><circle cx="22" cy="12.7" r="7.3" fill="#212428"/><path fill-rule="evenodd" d="M20.55,8.23 L20.52,6.37 L23.48,6.37 L23.45,8.23 L25.14,9.21 L26.74,8.25 L28.22,10.82 L26.60,11.72 L26.60,13.68 L28.22,14.58 L26.74,17.15 L25.14,16.19 L23.45,17.17 L23.48,19.03 L20.52,19.03 L20.55,17.17 L18.86,16.19 L17.26,17.15 L15.78,14.58 L17.40,13.68 L17.40,11.72 L15.78,10.82 L17.26,8.25 L18.86,9.21Z M20.10,12.70 a1.9,1.9 0 1 0 3.8,0 a1.9,1.9 0 1 0 -3.8,0Z"/></g></svg>
<svg class="i" style="left:297.2px;top:1219.0px" width="8" height="11.4" viewBox="0 0 8 11.4"><path fill="#c2c7d0" d="M0.3 6.2 Q-0.2 5.7 0.3 5.2 L5.6 0.2 Q6.4 -0.3 6.6 0.6 V10.8 Q6.4 11.7 5.6 11.2Z"/></svg>
<a class="t" style="left:72.80px;top:1271.07px;font-size:20px;letter-spacing:-0.187px;color:#c2c7d0;">Configurações</a>
<svg class="i" style="left:32.80px;top:1268.30px;" width="28.40" height="22.50" viewBox="0 0 1920 1761" preserveAspectRatio="none"><path fill="#c2c7d0" d="M821 1061Q896 986 896 880Q896 774 821 699Q746 624 640 624Q534 624 459 699Q384 774 384 880Q384 986 459 1061Q534 1136 640 1136Q746 1136 821 1061ZM1664 1392Q1664 1340 1626 1302Q1588 1264 1536 1264Q1484 1264 1446 1302Q1408 1340 1408 1392Q1408 1445 1446 1482Q1483 1520 1536 1520Q1589 1520 1626 1482Q1664 1445 1664 1392ZM1664 368Q1664 316 1626 278Q1588 240 1536 240Q1484 240 1446 278Q1408 316 1408 368Q1408 421 1446 458Q1483 496 1536 496Q1589 496 1626 458Q1664 421 1664 368ZM1280 789V974Q1280 984 1273 994Q1266 1003 1257 1004L1102 1028Q1091 1063 1070 1104Q1104 1152 1160 1219Q1167 1230 1167 1239Q1167 1251 1160 1258Q1137 1288 1078 1348Q1018 1407 999 1407Q988 1407 978 1400L863 1310Q826 1329 786 1341Q775 1449 763 1496Q756 1520 733 1520H547Q536 1520 527 1512Q518 1505 517 1495L494 1342Q460 1332 419 1311L301 1400Q294 1407 281 1407Q270 1407 260 1399Q116 1266 116 1239Q116 1230 123 1220Q133 1206 164 1167Q195 1128 211 1106Q188 1062 176 1024L24 1000Q14 999 7 990Q0 982 0 971V786Q0 776 7 766Q14 757 23 756L178 732Q189 697 210 656Q176 608 120 541Q113 530 113 521Q113 509 120 501Q142 471 202 412Q262 353 281 353Q292 353 302 360L417 450Q451 432 494 418Q505 310 517 264Q524 240 547 240H733Q744 240 753 248Q762 255 763 265L786 418Q820 428 861 449L979 360Q987 353 999 353Q1010 353 1020 361Q1164 494 1164 521Q1164 529 1157 540Q1145 556 1115 594Q1085 632 1070 654Q1093 702 1104 736L1256 759Q1266 761 1273 770Q1280 778 1280 789ZM1920 1322V1462Q1920 1478 1771 1493Q1759 1520 1741 1545Q1792 1658 1792 1683Q1792 1687 1788 1690Q1666 1761 1664 1761Q1656 1761 1618 1714Q1580 1667 1566 1646Q1546 1648 1536 1648Q1526 1648 1506 1646Q1492 1667 1454 1714Q1416 1761 1408 1761Q1406 1761 1284 1690Q1280 1687 1280 1683Q1280 1658 1331 1545Q1313 1520 1301 1493Q1152 1478 1152 1462V1322Q1152 1306 1301 1291Q1314 1262 1331 1239Q1280 1126 1280 1101Q1280 1097 1284 1094Q1288 1092 1319 1074Q1350 1056 1378 1040Q1406 1024 1408 1024Q1416 1024 1454 1070Q1492 1117 1506 1138Q1526 1136 1536 1136Q1546 1136 1566 1138Q1617 1067 1658 1026L1664 1024Q1668 1024 1788 1094Q1792 1097 1792 1101Q1792 1126 1741 1239Q1758 1262 1771 1291Q1920 1306 1920 1322ZM1920 298V438Q1920 454 1771 469Q1759 496 1741 521Q1792 634 1792 659Q1792 663 1788 666Q1666 737 1664 737Q1656 737 1618 690Q1580 643 1566 622Q1546 624 1536 624Q1526 624 1506 622Q1492 643 1454 690Q1416 737 1408 737Q1406 737 1284 666Q1280 663 1280 659Q1280 634 1331 521Q1313 496 1301 469Q1152 454 1152 438V298Q1152 282 1301 267Q1314 238 1331 215Q1280 102 1280 77Q1280 73 1284 70Q1288 68 1319 50Q1350 32 1378 16Q1406 0 1408 0Q1416 0 1454 46Q1492 93 1506 114Q1526 112 1536 112Q1546 112 1566 114Q1617 43 1658 2L1664 0Q1668 0 1788 70Q1792 73 1792 77Q1792 102 1741 215Q1758 238 1771 267Q1920 282 1920 298Z"/></svg>
</nav></div></div>
</div></aside>
</body></html>
